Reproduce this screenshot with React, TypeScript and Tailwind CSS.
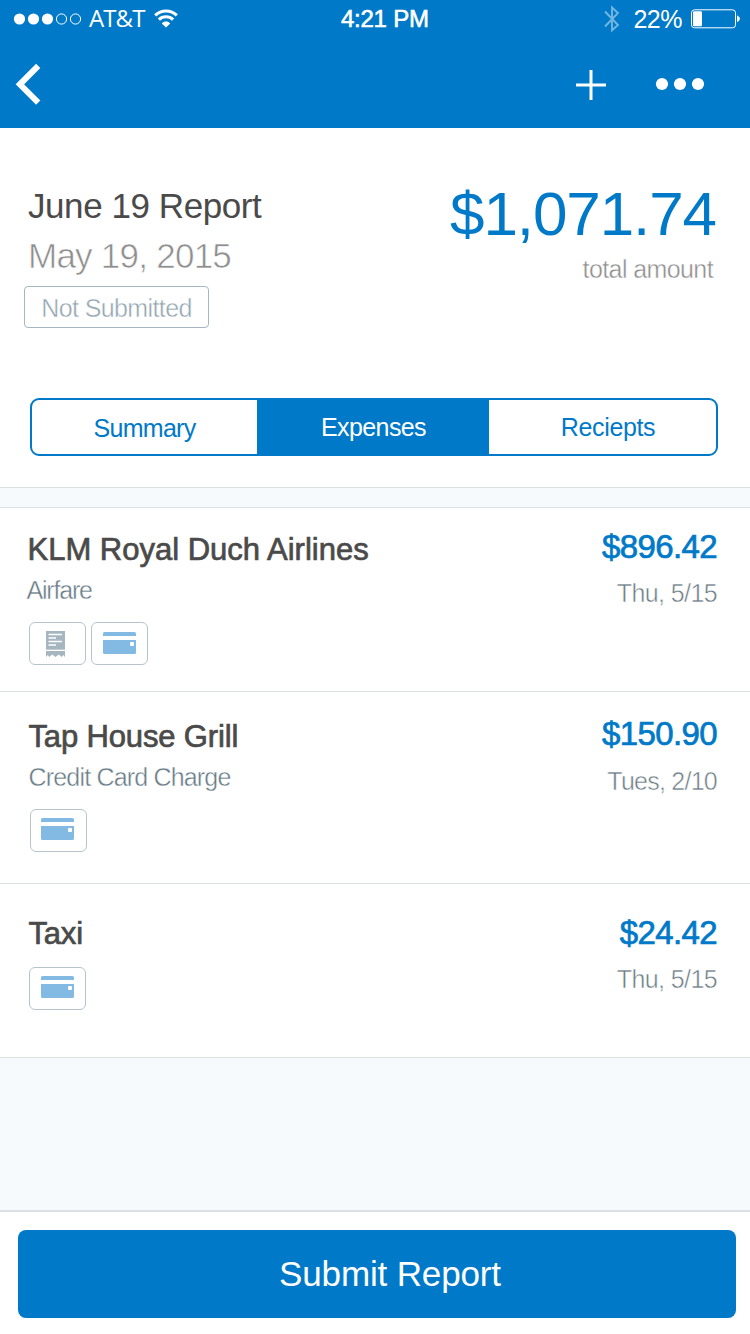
import type { ReactNode } from "react";

type BadgeKind = "receipt" | "card";

interface Expense {
  title: string;
  titleClass: string;
  category?: string;
  categoryClass?: string;
  amount: string;
  date: string;
  dateClass: string;
  badges: BadgeKind[];
  rowClass: string;
  badgesClass: string;
  rightClass: string;
  cardClass: string;
}

const expenses: Expense[] = [
  {
    title: "KLM Royal Duch Airlines",
    titleClass: "tracking-[0px]",
    category: "Airfare",
    categoryClass: "-ml-px tracking-[-1.2px]",
    amount: "$896.42",
    date: "Thu, 5/15",
    dateClass: "mt-[6px] tracking-[-0.6px]",
    badges: ["receipt", "card"],
    rowClass: "h-[184px] pt-[22px]",
    badgesClass: "mt-[12px] ml-[1px]",
    rightClass: "-mt-[3px]",
    cardClass: "pt-[1px]",
  },
  {
    title: "Tap House Grill",
    titleClass: "tracking-[-0.15px] ml-px",
    category: "Credit Card Charge",
    categoryClass: "ml-px tracking-[-0.82px]",
    amount: "$150.90",
    date: "Tues, 2/10",
    dateClass: "mt-[7px] tracking-[-0.75px]",
    badges: ["card"],
    rowClass: "h-[192px] pt-[25px]",
    badgesClass: "mt-[12px] ml-[2px]",
    rightClass: "-mt-[3px]",
    cardClass: "-ml-px",
  },
  {
    title: "Taxi",
    titleClass: "ml-px tracking-[-0.2px]",
    amount: "$24.42",
    date: "Thu, 5/15",
    dateClass: "mt-[6px] tracking-[-0.6px]",
    badges: ["card"],
    rowClass: "h-[174px] pt-[30px]",
    badgesClass: "mt-[13px] ml-[1px]",
    rightClass: "-mt-[1px]",
    cardClass: "",
  },
];

function WifiIcon() {
  return (
    <svg className="ml-[9px] block" width="24" height="20" viewBox="0 0 24 20" fill="none" stroke="white">
      <path d="M1.2 6.4 C7.2 .6 16.8 .6 22.8 6.4" strokeWidth="3.1" />
      <path d="M4.9 10.6 C8.8 6.8 15.2 6.8 19.1 10.6" strokeWidth="3.1" />
      <path d="M7.8 14.4 C10.2 11.9 13.8 11.9 16.2 14.4 L12 18.6 Z" fill="white" stroke="none" />
    </svg>
  );
}

function StatusBar() {
  return (
    <div className="grid h-[38px] grid-cols-[341px_1fr_auto] items-center text-white">
      <div className="flex h-[38px] items-center pl-[13px]">
        <svg className="block" width="70" height="14" viewBox="0 0 70 14" fill="none" stroke="white">
          {[0, 1, 2].map((i) => (
            <circle key={i} cx={6.5 + i * 14} cy="7" r="5.6" fill="white" stroke="none" />
          ))}
          <circle cx="48.5" cy="7" r="5.1" />
          <circle cx="62.5" cy="7" r="5.1" />
        </svg>
        <span className="-mt-[2px] ml-[6px] font-['Open_Sans',sans-serif] text-[24px] leading-[38px] tracking-[-0.9px]">
          AT&amp;T
        </span>
        <WifiIcon />
      </div>
      <span className="text-[24px] leading-[38px] tracking-[-0.25px] [-webkit-text-stroke:0.6px_white]">4:21 PM</span>
      <div className="flex h-[38px] items-center pr-[10px]">
        <svg className="mr-[13px] block opacity-45" width="16" height="28" viewBox="0 0 16 28" fill="none" stroke="white" strokeWidth="1.9">
          <path d="M1 6.5 L14 20 L8 25.3 V2.5 L14 8 L1 21.5" />
        </svg>
        <span className="text-[25px] leading-[38px] tracking-[-0.5px]">22%</span>
        <svg className="ml-[9px] block" width="49" height="20" viewBox="0 0 49 20">
          <rect x=".5" y=".8" width="44" height="18" rx="3" fill="none" stroke="white" />
          <rect x="2" y="2.3" width="9" height="15" rx="1.2" fill="white" />
          <path d="M46 6.3 Q49 8 49 9.8 Q49 11.6 46 13.3 Z" fill="white" />
        </svg>
      </div>
    </div>
  );
}

function NavBar() {
  return (
    <div className="flex h-[90px] items-start justify-between pt-[24px] pr-[45px] pl-[15px]">
      <button aria-label="Back">
        <svg className="block" width="28" height="44" viewBox="0 0 28 44" fill="none" stroke="white" strokeWidth="6">
          <path d="M23.2 3.9 L4.9 22.3 L23.2 40.7" strokeLinejoin="miter" />
        </svg>
      </button>
      <div className="flex h-[46px] items-center">
        <button aria-label="Add expense">
          <svg className="block" width="32" height="32" viewBox="0 0 32 32" fill="none" stroke="white" strokeWidth="3">
            <path d="M1 16 H31 M16 1 V31" />
          </svg>
        </button>
        <button aria-label="More" className="ml-[48px]">
          <svg className="-mt-[2px] block" width="50" height="14" viewBox="0 0 50 14" fill="white">
            <circle cx="7" cy="7" r="6.1" />
            <circle cx="25" cy="7" r="6.1" />
            <circle cx="43" cy="7" r="6.1" />
          </svg>
        </button>
      </div>
    </div>
  );
}

function BadgeFrame({ children }: { children: ReactNode }) {
  return <span className="block h-[43px] w-[57px] rounded-[6px] border border-[#b7c4cc]">{children}</span>;
}

function CardBadge({ className }: { className: string }) {
  return (
    <BadgeFrame>
      <span className={"block " + className}>
        <svg className="mt-[8px] ml-[11px] block" width="33" height="22" viewBox="0 0 33 22" fill="#82bae3">
          <path d="M0 4 V1.5 Q0 0 1.5 0 H31.5 Q33 0 33 1.5 V4 Z" />
          <path fillRule="evenodd" d="M0 8 H33 V20.5 Q33 22 31.5 22 H1.5 Q0 22 0 20.5 Z M28 10 Q27 10 27 11 V13 Q27 14 28 14 H30 Q31 14 31 13 V11 Q31 10 30 10 Z" />
        </svg>
      </span>
    </BadgeFrame>
  );
}

function ReceiptBadge() {
  return (
    <BadgeFrame>
      <svg className="mt-[8px] ml-[16px] block" width="19" height="26" viewBox="0 0 19 26">
        <path d="M0 0 H19 V18.7 H0 Z" fill="#a6b6c0" />
        <path d="M0 20 H19 V26 L17.2 24 L15.8 26 L12.7 23.4 L9.5 26 L6.3 23.4 L3.2 26 L1.8 24 L0 26 Z" fill="#a6b6c0" />
        <path d="M2.5 3.5 H16 M2.5 7 H10 M2.5 10.5 H16 M2.5 14 H10" stroke="white" strokeWidth="1.3" />
      </svg>
    </BadgeFrame>
  );
}

function ExpenseRow({ expense }: { expense: Expense }) {
  return (
    <li className={"flex justify-between border-b border-[#dbe0e4] bg-white pr-[33px] pl-[27.5px] " + expense.rowClass}>
      <div>
        <h2
          className={"text-[31px] leading-[40px] text-[#4a4a4a] [-webkit-text-stroke:0.7px_#4a4a4a] " + expense.titleClass}
        >
          {expense.title}
        </h2>
        {expense.category && (
          <p
            className={
              "text-[25px] leading-[40px] text-[#687b86] [-webkit-text-stroke:0.4px_white] " + expense.categoryClass
            }
          >
            {expense.category}
          </p>
        )}
        <div className={"flex gap-[5px] " + expense.badgesClass}>
          {expense.badges.map((kind) =>
            kind === "card" ? <CardBadge key={kind} className={expense.cardClass} /> : <ReceiptBadge key={kind} />,
          )}
        </div>
      </div>
      <div className={"text-right " + expense.rightClass}>
        <p className="text-[33px] leading-[40px] tracking-[-0.6px] text-[#0079c9] [-webkit-text-stroke:0.7px_#0079c9]">
          {expense.amount}
        </p>
        <p className={"text-[25px] leading-[40px] text-[#6c7c85] [-webkit-text-stroke:0.5px_white] " + expense.dateClass}>
          {expense.date}
        </p>
      </div>
    </li>
  );
}

export default function App() {
  return (
    <div className="flex h-[1334px] w-[750px] flex-col overflow-hidden bg-[#f6fafd] font-['Liberation_Sans',Arial,sans-serif] whitespace-nowrap">
      <header className="h-[128px] bg-[#0079c9]">
        <StatusBar />
        <NavBar />
      </header>

      <section className="h-[360px] border-b border-[#dbe0e4] bg-white">
        <div className="flex h-[270px] justify-between pt-[56px] pr-[34px] pl-[24px]">
          <div className="pt-[2px]">
            <h1 className="ml-[4px] text-[35px] leading-[40px] tracking-[-0.43px] text-[#4a4a4a]">June 19 Report</h1>
            <p className="mt-[10px] ml-[4px] text-[35px] leading-[40px] tracking-[-0.75px] text-[#8e8e8e] [-webkit-text-stroke:0.6px_white]">
              May 19, 2015
            </p>
            <div className="mt-[10px] flex h-[42px] w-[185px] items-center justify-center rounded-[4px] border border-[#a5b6c1] text-[25px] leading-[40px] text-[#93a6b2]">
              <span className="pt-px tracking-[-0.6px] [-webkit-text-stroke:0.4px_white]">Not Submitted</span>
            </div>
          </div>
          <div className="-mt-px text-right">
            <p className="text-[62px] leading-[62px] tracking-[-1.1px] text-[#0079c9]">$1,071.74</p>
            <p className="mt-[4px] mr-[3px] text-[25px] leading-[40px] tracking-[-0.6px] text-[#8e8e8e] [-webkit-text-stroke:0.4px_white]">
              total amount
            </p>
          </div>
        </div>
        <nav className="ml-[30px] grid h-[58px] w-[688px] grid-cols-[225px_232px_1fr] overflow-hidden rounded-[9px] border-2 border-[#0079c9] text-center text-[25px] leading-[54px] text-[#0079c9]">
          <button className="pt-px tracking-[-0.7px]">Summary</button>
          <button className="-mt-px bg-[#0079c9] pl-px tracking-[-0.6px] text-white">Expenses</button>
          <button className="-mt-px pl-[11px] tracking-[-0.35px]">Reciepts</button>
        </nav>
      </section>

      <ul className="mt-[19px] border-t border-[#dbe0e4]">
        {expenses.map((expense) => (
          <ExpenseRow key={expense.title} expense={expense} />
        ))}
      </ul>

      <footer className="mt-auto h-[124px] border-t-2 border-[#dbe0e4] bg-white pt-[18px] pl-[18px]">
        <button className="h-[88px] w-[718px] rounded-[8px] bg-[#0079c9] pl-[26px] text-center text-[35px] tracking-[-0.15px] text-white">
          Submit Report
        </button>
      </footer>
    </div>
  );
}
